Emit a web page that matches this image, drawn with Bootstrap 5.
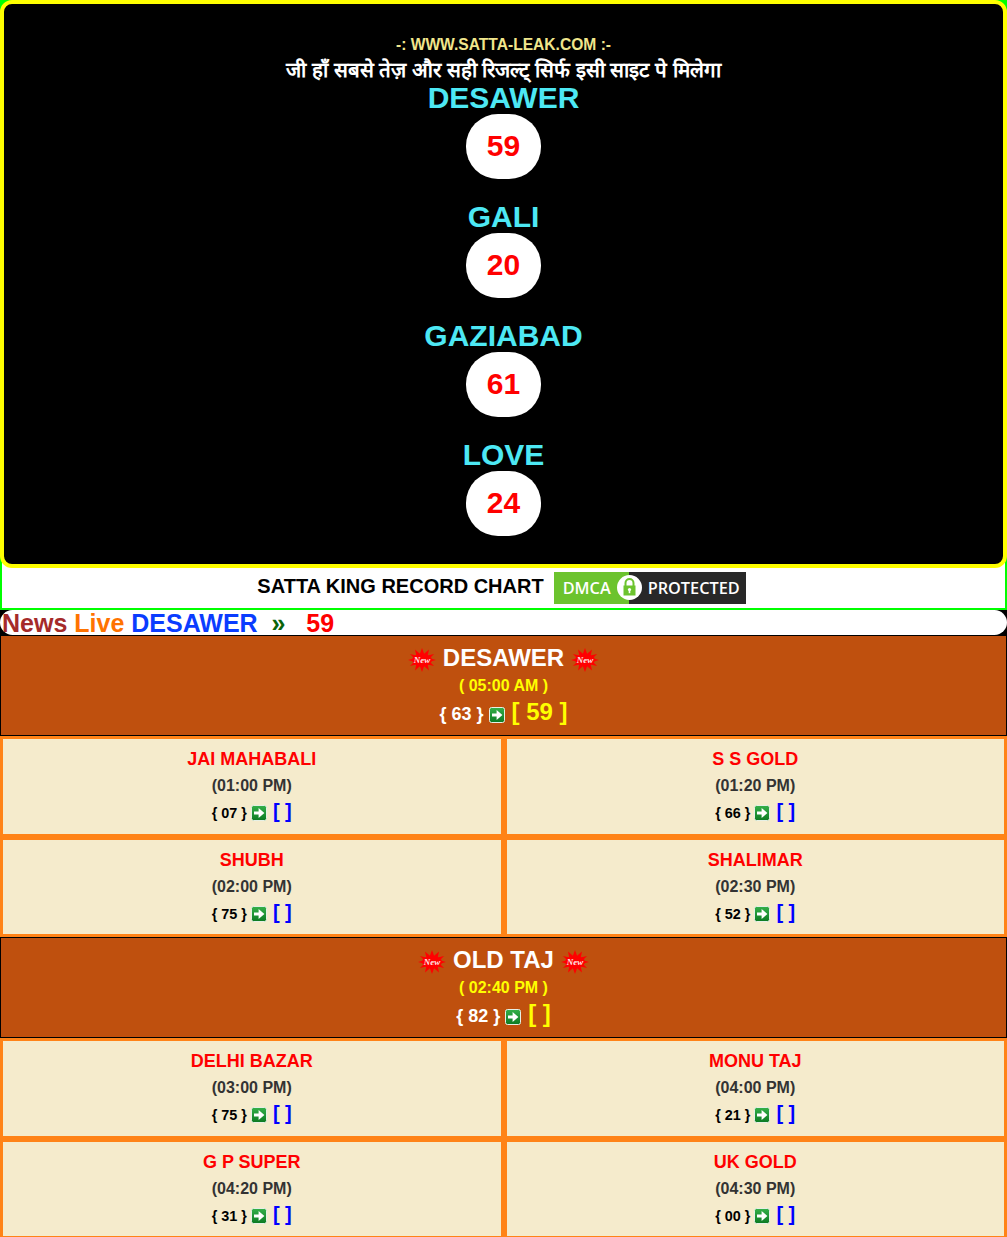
<!DOCTYPE html>
<html lang="en">
<head>
<meta charset="UTF-8">
<title>Satta Leak</title>
<link href="https://cdn.jsdelivr.net/npm/bootstrap@5.3.3/dist/css/bootstrap.min.css" rel="stylesheet">
<style>
body { margin: 0; background: #000; font-family: "Liberation Sans", Arial, sans-serif; font-weight: 700; overflow-x: hidden; }
.top-wrap { background: #0f0; }
.top-box { position: relative; z-index: 1; background: #000; border: 4px solid #ff0; border-radius: 12px; height: 568px; padding-top: 32px; text-align: center; }
.site-name { color: #f0e68c; font-size: 15.6px; line-height: 18px; }
.hindi { color: #fff; font-size: 20.5px; line-height: 30px; height: 23px; margin-top: 1px; white-space: nowrap; }
.game-name { color: #4de8f4; font-size: 30px; line-height: 30px; }
.game-res { background: #fff; color: #f00; font-size: 30px; width: 75px; height: 65px; line-height: 63px; border-radius: 32px; margin: 1px auto 0; }
.game-item { height: 119px; padding-top: 5px; }
.chart-box { background: #fff; border: 2px solid #0f0; border-top: 0; height: 54px; margin-top: -12px; padding: 12px 4px 0 0; gap: 10px; }
.chart-text { color: #000; font-size: 20px; margin-bottom: 4px; }
.dmca { position: relative; display: flex; width: 192px; height: 32px; color: #fff; font-family: "Open Sans", sans-serif; font-weight: 600; align-items: center; }
.dmca-left { width: 75px; height: 100%; background: #6cc32e; font-size: 16.3px; line-height: 32px; padding-left: 9px; }
.dmca-right { flex: 1; height: 100%; background: #282828; font-size: 16.3px; line-height: 32px; padding-left: 19px; white-space: nowrap; }
.dmca-lock { position: absolute; left: 63px; top: 3px; }
.news-bar { background: #fff; border-radius: 13px; height: 25px; font-size: 25px; line-height: 27px; padding-left: 2px; white-space: pre; }
.head-box { background: #bf500e; border: 1px solid #000; height: 101px; text-align: center; color: #fff; }
.head-title { font-size: 24px; line-height: 29px; padding-top: 7px; height: 38px; }
.head-time { color: #ff0; font-size: 16px; line-height: 24px; }
.head-res { font-size: 18px; line-height: 28px; }
.head-res b { color: #ff0; font-size: 24px; margin-left: 2px; }
.cell-grid { display: grid; grid-template-columns: 1fr 1fr; }
.cell { background: #f5ebcc; border: 3px solid #ff8317; height: 100.5px; text-align: center; padding-top: 8px; }
.cell-name { color: #f00; font-size: 18px; line-height: 25px; }
.cell-time { color: #333; font-size: 16px; line-height: 28px; }
.cell-res { color: #000; font-size: 14.4px; line-height: 22px; }
.cell-res b { color: #00f; font-size: 20px; margin-left: 2px; }
.arrow-icon { vertical-align: -3px; }
.new-icon { vertical-align: -6px; }
</style>
</head>
<body>
<svg width="0" height="0" class="d-block">
  <defs>
    <linearGradient id="arrFill" x1="0" y1="0" x2="0" y2="1">
      <stop offset="0" stop-color="#35b04a"/>
      <stop offset="1" stop-color="#0c7a22"/>
    </linearGradient>
    <symbol id="arr" viewBox="0 0 16 16">
      <rect x=".5" y=".5" width="15" height="15" rx="2" fill="url(#arrFill)" stroke="#e6f0e6"/>
      <path d="M3 6.4h4.6V3L13.4 8l-5.8 5V9.6H3z" fill="#fff"/>
    </symbol>
    <symbol id="newb" viewBox="0 0 28 24">
      <polygon fill="#f00" points="28,12 21.7,13.7 26.1,18 19.7,16.6 21,22.4 16.1,18.3 14,24 11.9,18.3 7,22.4 8.3,16.6 1.9,18 6.3,13.7 0,12 6.3,10.3 1.9,6 8.3,7.4 7,1.6 11.9,5.7 14,0 16.1,5.7 21,1.6 19.7,7.4 26.1,6 21.7,10.3"/>
      <ellipse cx="14" cy="12" rx="10" ry="6" fill="#f00"/>
      <text x="14" y="15" text-anchor="middle" font-family="Liberation Serif" font-style="italic" font-weight="700" font-size="9" fill="#ffe6e6">New</text>
    </symbol>
  </defs>
</svg>

<div class="top-wrap">
  <div class="top-box">
    <div class="site-name">-: WWW.SATTA-LEAK.COM :-</div>
    <div class="hindi">जी हाँ सबसे तेज़ और सही रिजल्ट् सिर्फ इसी साइट पे मिलेगा</div>
    <div class="game-item"><div class="game-name">DESAWER</div><div class="game-res">59</div></div>
    <div class="game-item"><div class="game-name">GALI</div><div class="game-res">20</div></div>
    <div class="game-item"><div class="game-name">GAZIABAD</div><div class="game-res">61</div></div>
    <div class="game-item"><div class="game-name">LOVE</div><div class="game-res">24</div></div>
  </div>
</div>

<div class="chart-box d-flex justify-content-center align-items-center">
  <span class="chart-text">SATTA KING RECORD CHART</span>
  <span class="dmca">
    <span class="dmca-left">DMCA</span>
    <span class="dmca-right">PROTECTED</span>
    <svg class="dmca-lock" width="25" height="25" viewBox="0 0 25 25">
      <circle cx="12.5" cy="12.5" r="12.5" fill="#fff"/>
      <path d="M8.5 11V8a4 4 0 0 1 8 0v3" fill="none" stroke="#6cc32e" stroke-width="2"/>
      <rect x="6.5" y="10.5" width="12" height="10" fill="#6cc32e"/>
      <circle cx="12.5" cy="14.5" r="1.6" fill="#fff"/>
      <rect x="11.7" y="15" width="1.6" height="3.2" fill="#fff"/>
    </svg>
  </span>
</div>

<div class="news-bar"><span style="color:#a52a2a">News</span> <span style="color:#ff7300">Live</span> <span style="color:#0a3cff">DESAWER</span>  <span style="color:#0a640a">»</span>   <span style="color:#f00">59</span></div>

<div class="head-box">
  <div class="head-title"><svg width="28" height="24" class="new-icon"><use href="#newb"/></svg> DESAWER <svg width="28" height="24" class="new-icon"><use href="#newb"/></svg></div>
  <div class="head-time">( 05:00 AM )</div>
  <div class="head-res">{ 63 } <svg width="16" height="16" class="arrow-icon"><use href="#arr"/></svg> <b>[ 59 ]</b></div>
</div>
<div class="cell-grid">
  <div class="cell"><div class="cell-name">JAI MAHABALI</div><div class="cell-time">(01:00 PM)</div><div class="cell-res">{ 07 } <svg width="16" height="16" class="arrow-icon"><use href="#arr"/></svg> <b>[ ]</b></div></div>
  <div class="cell"><div class="cell-name">S S GOLD</div><div class="cell-time">(01:20 PM)</div><div class="cell-res">{ 66 } <svg width="16" height="16" class="arrow-icon"><use href="#arr"/></svg> <b>[ ]</b></div></div>
  <div class="cell"><div class="cell-name">SHUBH</div><div class="cell-time">(02:00 PM)</div><div class="cell-res">{ 75 } <svg width="16" height="16" class="arrow-icon"><use href="#arr"/></svg> <b>[ ]</b></div></div>
  <div class="cell"><div class="cell-name">SHALIMAR</div><div class="cell-time">(02:30 PM)</div><div class="cell-res">{ 52 } <svg width="16" height="16" class="arrow-icon"><use href="#arr"/></svg> <b>[ ]</b></div></div>
</div>
<div class="head-box">
  <div class="head-title"><svg width="28" height="24" class="new-icon"><use href="#newb"/></svg> OLD TAJ <svg width="28" height="24" class="new-icon"><use href="#newb"/></svg></div>
  <div class="head-time">( 02:40 PM )</div>
  <div class="head-res">{ 82 } <svg width="16" height="16" class="arrow-icon"><use href="#arr"/></svg> <b>[ ]</b></div>
</div>
<div class="cell-grid">
  <div class="cell"><div class="cell-name">DELHI BAZAR</div><div class="cell-time">(03:00 PM)</div><div class="cell-res">{ 75 } <svg width="16" height="16" class="arrow-icon"><use href="#arr"/></svg> <b>[ ]</b></div></div>
  <div class="cell"><div class="cell-name">MONU TAJ</div><div class="cell-time">(04:00 PM)</div><div class="cell-res">{ 21 } <svg width="16" height="16" class="arrow-icon"><use href="#arr"/></svg> <b>[ ]</b></div></div>
  <div class="cell"><div class="cell-name">G P SUPER</div><div class="cell-time">(04:20 PM)</div><div class="cell-res">{ 31 } <svg width="16" height="16" class="arrow-icon"><use href="#arr"/></svg> <b>[ ]</b></div></div>
  <div class="cell"><div class="cell-name">UK GOLD</div><div class="cell-time">(04:30 PM)</div><div class="cell-res">{ 00 } <svg width="16" height="16" class="arrow-icon"><use href="#arr"/></svg> <b>[ ]</b></div></div>
</div>
<script src="https://cdn.jsdelivr.net/npm/bootstrap@5.3.3/dist/js/bootstrap.bundle.min.js"></script>
</body>
</html>
